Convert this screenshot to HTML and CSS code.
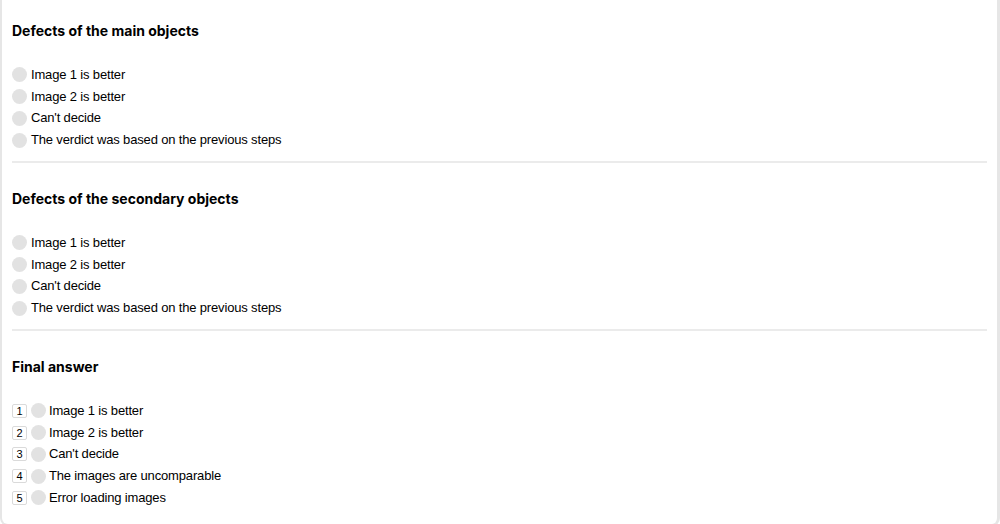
FILE: index.html
```html
<!DOCTYPE html>
<html>
<head>
<meta charset="utf-8">
<link rel="stylesheet" href="styles.css">
</head>
<body>
<div class="card">
  <section class="group">
    <h3 class="title">Defects of the main objects</h3>
    <div class="options">
      <label class="opt"><span class="radio"></span><span class="label">Image 1 is better</span></label>
      <label class="opt"><span class="radio"></span><span class="label">Image 2 is better</span></label>
      <label class="opt"><span class="radio"></span><span class="label">Can't decide</span></label>
      <label class="opt"><span class="radio"></span><span class="label">The verdict was based on the previous steps</span></label>
    </div>
  </section>
  <section class="group">
    <h3 class="title">Defects of the secondary objects</h3>
    <div class="options">
      <label class="opt"><span class="radio"></span><span class="label">Image 1 is better</span></label>
      <label class="opt"><span class="radio"></span><span class="label">Image 2 is better</span></label>
      <label class="opt"><span class="radio"></span><span class="label">Can't decide</span></label>
      <label class="opt"><span class="radio"></span><span class="label">The verdict was based on the previous steps</span></label>
    </div>
  </section>
  <section class="group last">
    <h3 class="title">Final answer</h3>
    <div class="options">
      <label class="opt"><span class="key">1</span><span class="radio"></span><span class="label">Image 1 is better</span></label>
      <label class="opt"><span class="key">2</span><span class="radio"></span><span class="label">Image 2 is better</span></label>
      <label class="opt"><span class="key">3</span><span class="radio"></span><span class="label">Can't decide</span></label>
      <label class="opt"><span class="key">4</span><span class="radio"></span><span class="label">The images are uncomparable</span></label>
      <label class="opt"><span class="key">5</span><span class="radio"></span><span class="label">Error loading images</span></label>
    </div>
  </section>
</div>
</body>
</html>
```
FILE: styles.css
```css
html, body {
  margin: 0;
  padding: 0;
  background: #ffffff;
  overflow: hidden;
}
body {
  width: 1000px;
  height: 524px;
  font-family: "Liberation Sans", Arial, sans-serif;
  color: #000;
}
.card {
  box-sizing: border-box;
  width: 1000px;
  height: 531px;
  margin-top: -5px;
  padding: 0 10px;
  border-left: 2px solid #e6e6e6;
  border-right: 3px solid #e6e6e6;
  border-bottom: 2px solid #e6e6e6;
  border-radius: 0 0 8px 8px;
}
.group {
  padding: 26px 0 10px 0;
  border-bottom: 2px solid #ebebeb;
}
.group.last {
  border-bottom: none;
  padding-bottom: 0;
}
.title {
  margin: 0 0 23px 0;
  font-family: Inter, "Open Sans", sans-serif;
  font-weight: 700;
  font-size: 14px;
  line-height: 20px;
  letter-spacing: 0;
}
.options {
  display: flex;
  flex-direction: column;
}
.opt {
  display: flex;
  align-items: center;
  height: 21.75px;
  font-size: 13px;
  letter-spacing: -0.16px;
}
.radio {
  width: 15px;
  height: 15px;
  border-radius: 50%;
  background: #e2e2e2;
  margin-right: 4px;
  flex: none;
}
.key {
  box-sizing: border-box;
  width: 15px;
  height: 14px;
  border: 1px solid #dadada;
  border-radius: 2px;
  font-size: 11px;
  line-height: 12px;
  letter-spacing: 0;
  text-align: center;
  margin-right: 4px;
  flex: none;
}
.key + .radio {
  margin-right: 3px;
}
.label {
  line-height: 16px;
}
```
